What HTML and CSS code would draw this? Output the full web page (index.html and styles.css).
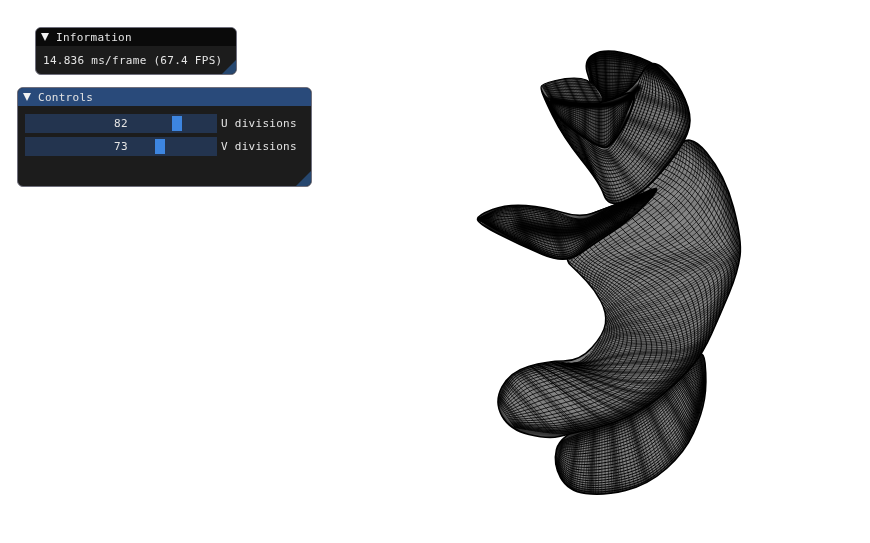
FILE: index.html
```html
<!DOCTYPE html>
<html lang="en">
<head>
<meta charset="utf-8">
<title>Parametric surface</title>
<link rel="stylesheet" href="styles.css">
</head>
<body>
<canvas id="view" class="view" width="870" height="543"></canvas>
<section class="win win-info">
  <header class="title title-idle"><span class="arrow"></span><span>Information</span></header>
  <div class="body body-info">14.836 ms/frame (67.4 FPS)</div>
  <span class="grip"></span>
</section>
<section class="win win-controls">
  <header class="title title-active"><span class="arrow"></span><span>Controls</span></header>
  <div class="body body-controls">
    <div class="row">
      <div class="slider"><span class="value">82</span><span class="knob knob-u"></span></div>
      <span class="label">U divisions</span>
    </div>
    <div class="row">
      <div class="slider"><span class="value">73</span><span class="knob knob-v"></span></div>
      <span class="label">V divisions</span>
    </div>
  </div>
  <span class="grip"></span>
</section>
<script src="script.js"></script>
</body>
</html>
```
FILE: styles.css
```css
html, body { margin: 0; padding: 0; background: #fff; overflow: hidden; }
body { width: 870px; height: 543px; position: relative; font: 11px/13px "DejaVu Sans Mono", "Liberation Mono", monospace; letter-spacing: .28px; color: #e4e4e4; }
.view { display: block; }
.win { position: absolute; box-sizing: border-box; background: #1c1c1c; border: 1px solid #6f6f7c; border-radius: 6px; overflow: hidden; display: flex; flex-direction: column; }
.win-info { left: 35px; top: 27px; width: 202px; height: 48px; }
.win-controls { left: 17px; top: 87px; width: 295px; height: 100px; }
.title { flex: none; height: 18px; display: flex; align-items: center; gap: 7px; padding-left: 5px; }
.title-idle { background: #0a0a0a; }
.title-active { background: #294a7a; }
.arrow { width: 0; height: 0; border-left: 4.5px solid transparent; border-right: 4.5px solid transparent; border-top: 8px solid #f2f2f2; }
.body-info { padding: 8px 0 0 7px; }
.body-controls { padding: 8px 0 0 7px; display: flex; flex-direction: column; gap: 4px; }
.row { display: flex; align-items: center; gap: 4px; }
.slider { position: relative; width: 192px; height: 19px; background: #23344f; display: flex; align-items: center; justify-content: center; }
.value { position: relative; }
.knob { position: absolute; top: 2px; width: 10px; height: 15px; background: #3d85e0; }
.knob-u { left: 147px; }
.knob-v { left: 130px; }
.grip { position: absolute; right: 0; bottom: 0; width: 0; height: 0; border-left: 15px solid transparent; border-bottom: 15px solid #26476f; }
.win-info .grip { border-left-width: 14px; border-bottom-width: 14px; }
```
FILE: script.js
```js
(function () {
  var ctx = document.getElementById('view').getContext('2d');

  function spline(pts, t) {
    var n = pts.length - 1, f = Math.min(Math.max(t, 0), 0.999999) * n, i = Math.floor(f), s = f - i;
    var p0 = pts[Math.max(i - 1, 0)], p1 = pts[i], p2 = pts[i + 1], p3 = pts[Math.min(i + 2, n)];
    function c(k) {
      return 0.5 * (2 * p1[k] + (p2[k] - p0[k]) * s + (2 * p0[k] - 5 * p1[k] + 4 * p2[k] - p3[k]) * s * s + (3 * p1[k] - p0[k] - 3 * p2[k] + p3[k]) * s * s * s);
    }
    return [c(0), c(1)];
  }
  /* closed smooth outline through the midpoints of a polygon */
  function traceLoop(pts) {
    var n = pts.length, i;
    ctx.beginPath();
    ctx.moveTo((pts[n - 1][0] + pts[0][0]) / 2, (pts[n - 1][1] + pts[0][1]) / 2);
    for (i = 0; i < n; i++) {
      var q = pts[(i + 1) % n];
      ctx.quadraticCurveTo(pts[i][0], pts[i][1], (pts[i][0] + q[0]) / 2, (pts[i][1] + q[1]) / 2);
    }
    ctx.closePath();
  }
  function smooth(v) { return v * v * (3 - 2 * v); }
  /* lines bunch up towards both edges, as a surface turning away does */
  function pt(o, u, v) {
    var a = spline(o.a, u), b = spline(o.b, u);
    var w = o.pack * v + (1 - o.pack) * smooth(smooth(v));
    return [a[0] + (b[0] - a[0]) * w, a[1] + (b[1] - a[1]) * w];
  }
  function zone(o, u) {
    /* 0 where the band is open and flat, 1 where it curls into a lobe */
    if (o.stop === undefined) return 1;
    return Math.max(0, Math.min(1, (u - o.stop) / o.fade));
  }
  function curve(f, steps) {
    var pen = false, j, p;
    for (j = 0; j <= steps; j++) {
      p = f(j / steps);
      if (!p) { pen = false; continue; }
      if (pen) ctx.lineTo(p[0], p[1]); else ctx.moveTo(p[0], p[1]);
      pen = true;
    }
  }
  function soft(pts, width, blur, alpha) {
    ctx.save();
    ctx.filter = 'blur(' + blur + 'px)';
    ctx.globalAlpha = alpha;
    ctx.strokeStyle = '#000';
    ctx.lineWidth = width;
    ctx.lineCap = 'round';
    ctx.beginPath();
    curve(function (t) { return spline(pts, t); }, 80);
    ctx.stroke();
    ctx.restore();
  }
  function patch(o) {
    var i, k2 = o.k || 0, sk = o.skew || 0, top = o.topAmp === undefined ? 1 : o.topAmp;
    ctx.save();
    traceLoop(o.sil);
    ctx.fillStyle = o.fill;
    ctx.fill();
    ctx.clip();
    ctx.strokeStyle = '#000';
    /* family one: runs across the band, leaning along it, gathered into folds */
    ctx.lineWidth = o.lw || 0.6;
    ctx.beginPath();
    function across(i) {
      var base = i / o.nu, z = zone(o, base), s = sk * (1 - z), am = o.amp * (top + (1 - top) * z);
      return function (v) {
        var u = base + am / (o.ridges * 2 * Math.PI) * Math.sin(base * o.ridges * 2 * Math.PI) + s * (v - 1);
        return (u < 0 || u > 1) ? null : pt(o, u, v);
      };
    }
    var extra = Math.ceil(Math.abs(sk) * o.nu);
    for (i = -extra; i <= o.nu + extra; i++) curve(across(i), 50);
    ctx.stroke();
    /* family two: runs along the band, drifting across it where it is open */
    ctx.lineWidth = o.lw2 || 0.9;
    ctx.beginPath();
    function along(i) {
      return function (u) {
        var cap = o.kstop === undefined ? u : Math.min(u, o.kstop + (u > o.kstop ? 0.1 * (1 - Math.exp(-(u - o.kstop) * 8)) : u - o.kstop));
        var v = i / o.nv + k2 * cap;
        return (v < 0 || v > 1) ? null : pt(o, u, v);
      };
    }
    var extra2 = Math.ceil(Math.abs(k2) * o.nv);
    for (i = -extra2; i <= o.nv + extra2; i++) curve(along(i), 160);
    ctx.stroke();
    /* soft shading at each fold */
    for (i = 0; i < o.ridges; i++) {
      var uR = (i + 0.5) / o.ridges;
      ctx.save();
      ctx.filter = 'blur(3px)';
      ctx.globalAlpha = (o.ridgeAlpha === undefined ? 0.35 : o.ridgeAlpha) * (top + (1 - top) * zone(o, uR));
      ctx.lineWidth = 5;
      ctx.beginPath();
      curve((function (u0) { return function (v) { return pt(o, u0, v); }; }(uR)), 30);
      ctx.stroke();
      ctx.restore();
    }
    (o.shade || []).forEach(function (s) { soft(s[0], s[1], s[2], s[3]); });
    ctx.restore();
    traceLoop(o.sil);
    ctx.lineWidth = o.edge || 1.6;
    ctx.strokeStyle = '#000';
    ctx.stroke();
  }

  ctx.fillStyle = '#fff';
  ctx.fillRect(0, 0, 870, 543);

  /* lower lobe, behind the main band */
  patch({
    fill: '#808080', nu: 100, nv: 26, k: 0, ridges: 9, amp: 0.6, pack: 0.85, lw: 0.5, lw2: 1,
    a: [[706, 345], [668, 388], [630, 415], [590, 430], [558, 442]],
    b: [[706, 383], [699, 414], [683, 450], [647, 483], [603, 494], [570, 488], [553, 462]],
    sil: [[703, 343], [707, 383], [702, 414], [685, 452], [648, 485], [603, 496], [568, 491], [553, 464], [560, 435], [620, 412], [665, 382]],
    shade: [[[[700, 345], [660, 395], [615, 422], [565, 438]], 10, 4, 0.85], [[[706, 383], [684, 450], [647, 484], [603, 495], [570, 489], [554, 462]], 8, 3, 0.85]]
  });
  /* main band, from the top neck down to the upper lobe */
  patch({
    fill: '#858585', nu: 120, nv: 26, k: 1.7, skew: -0.26, stop: 0.42, fade: 0.42, kstop: 0.5, topAmp: 0.3, ridges: 19, amp: 0.7, pack: 0.6, lw: 0.6, lw2: 0.85, ridgeAlpha: 0.3,
    a: [[600, 205], [572, 222], [566, 258], [595, 290], [605, 313], [603, 333], [580, 361], [547, 362], [513, 373], [497, 402]],
    b: [[688, 133], [723, 177], [740, 240], [737, 270], [720, 315], [703, 353], [683, 377], [653, 403], [617, 423], [565, 434], [515, 428]],
    sil: [[688, 130], [725, 175], [742, 240], [738, 272], [720, 315], [703, 353], [683, 377], [653, 403], [617, 423], [570, 434], [548, 439], [510, 430], [494, 402], [510, 372], [547, 361], [580, 361], [604, 334], [607, 313], [595, 290], [578, 272], [563, 258], [580, 218], [607, 208], [637, 197], [667, 167]],
    shade: [[[[688, 133], [723, 177], [740, 240], [737, 272], [720, 315], [703, 353]], 13, 5, 0.85],
            [[[703, 353], [683, 377], [653, 403], [617, 423], [570, 433]], 18, 6, 0.9],
            [[[570, 434], [513, 428], [497, 402], [513, 373], [547, 362]], 7, 3, 0.85]]
  });
  /* flange reaching out to the left */
  patch({
    fill: '#6a6a6a', nu: 90, nv: 22, k: 0, ridges: 6, amp: 0.6, pack: 0.7, lw: 0.5, lw2: 1,
    a: [[477, 219], [507, 207], [545, 209], [580, 219], [607, 209], [640, 196]],
    b: [[477, 219], [520, 243], [563, 262], [592, 243], [630, 218], [662, 186]],
    sil: [[477, 223], [478, 215], [507, 204], [545, 207], [580, 218], [607, 208], [637, 196], [664, 184], [632, 219], [592, 245], [565, 264], [520, 245]],
    shade: [[[[520, 226], [565, 232], [592, 224], [625, 206], [655, 188]], 15, 4, 1], [[[479, 219], [507, 206], [545, 209]], 4, 1.5, 0.8], [[[485, 226], [520, 243], [563, 260], [592, 243], [630, 218]], 7, 2, 0.9]]
  });
  /* dark inside of the funnel, far wall */
  patch({
    fill: '#4a4a4a', nu: 90, nv: 20, k: 0, ridges: 7, amp: 0.6, pack: 0.7, lw: 0.5, lw2: 1,
    a: [[586, 60], [603, 51], [640, 58], [670, 75]],
    b: [[592, 85], [605, 100], [630, 95], [648, 92]],
    sil: [[590, 83], [584, 60], [603, 49], [640, 56], [674, 76], [660, 100], [630, 105], [600, 105]],
    shade: [[[[590, 62], [603, 54], [640, 60], [670, 78]], 8, 3, 0.95], [[[595, 90], [612, 100], [640, 88]], 12, 4, 0.9]]
  });
  /* front of the funnel, sweeping under the fold and up to the rim */
  patch({
    fill: '#7c7c7c', nu: 110, nv: 19, k: 0, ridges: 9, amp: 0.5, pack: 0.8, lw: 0.5, lw2: 1, ridgeAlpha: 0.3,
    a: [[548, 100], [558, 112], [572, 126], [590, 142], [606, 150], [618, 135], [628, 112], [638, 85], [648, 60]],
    b: [[541, 88], [563, 137], [590, 172], [610, 205], [640, 195], [667, 167], [689, 133], [690, 105], [652, 60]],
    sil: [[541, 86], [542, 94], [563, 137], [600, 183], [608, 207], [637, 197], [667, 167], [690, 133], [690, 108], [673, 76], [650, 58], [634, 88], [605, 103], [575, 103], [550, 98]],
    shade: [[[[647, 62], [672, 80], [688, 110], [688, 135], [667, 168]], 12, 4, 0.95],
            [[[667, 168], [637, 197], [610, 205]], 6, 3, 0.7],
            [[[543, 92], [563, 137], [590, 172]], 6, 2.5, 0.7]]
  });
  /* front wall above the fold */
  patch({
    fill: '#666', nu: 70, nv: 14, k: 0, ridges: 6, amp: 0.6, pack: 0.9, lw: 0.5, lw2: 1, ridgeAlpha: 0.45,
    a: [[546, 100], [578, 104], [606, 106], [634, 92]],
    b: [[552, 112], [578, 132], [606, 150], [636, 92]],
    sil: [[546, 98], [560, 120], [580, 135], [604, 150], [614, 142], [628, 120], [638, 88], [605, 103], [570, 104]],
    edge: 2,
    shade: [[[[560, 120], [580, 135], [604, 149], [614, 141], [628, 118]], 7, 2, 0.95]]
  });
  /* near wall of the funnel, seen over the rim */
  patch({
    fill: '#777', nu: 60, nv: 10, k: 0, ridges: 5, amp: 0.6, pack: 0.9, lw: 0.5, lw2: 1, ridgeAlpha: 0.4,
    a: [[542, 86], [565, 79], [591, 81]],
    b: [[550, 100], [578, 106], [606, 106]],
    sil: [[541, 90], [541, 84], [570, 77], [592, 80], [608, 105], [572, 106], [548, 100]],
    edge: 1.2,
    shade: [[[[552, 102], [578, 106], [606, 106]], 7, 1.5, 1]]
  });
  /* the black fold running under the rim */
  soft([[552, 101], [578, 105], [605, 105], [625, 99], [638, 88]], 7, 1, 1);
}());
```
